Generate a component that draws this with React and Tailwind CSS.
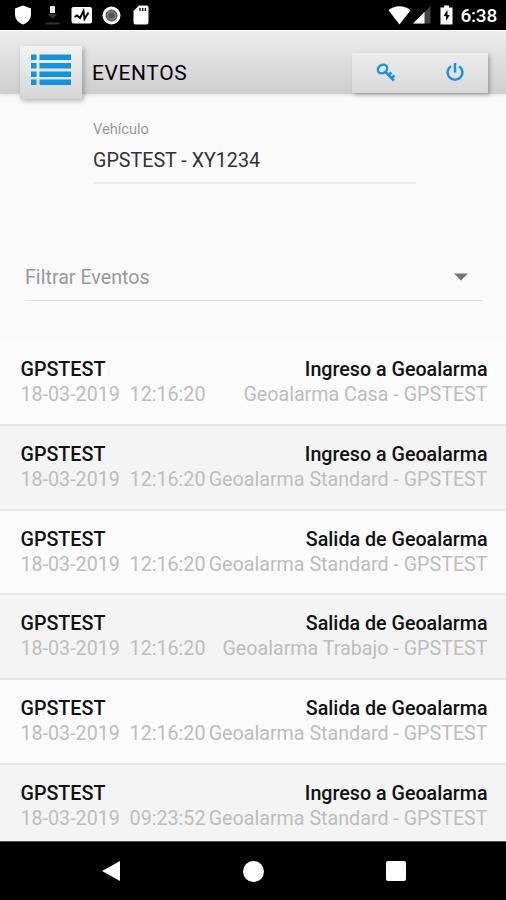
const events = [
  { time: "12:16:20", type: "Ingreso a Geoalarma", zone: "Geoalarma Casa - GPSTEST" },
  { time: "12:16:20", type: "Ingreso a Geoalarma", zone: "Geoalarma Standard - GPSTEST" },
  { time: "12:16:20", type: "Salida de Geoalarma", zone: "Geoalarma Standard - GPSTEST" },
  { time: "12:16:20", type: "Salida de Geoalarma", zone: "Geoalarma Trabajo - GPSTEST" },
  { time: "12:16:20", type: "Salida de Geoalarma", zone: "Geoalarma Standard - GPSTEST" },
  { time: "09:23:52", type: "Ingreso a Geoalarma", zone: "Geoalarma Standard - GPSTEST" },
];

function StatusBar() {
  return (
    <div className="h-[30px] flex-none bg-black flex items-center justify-between pl-[14px] pr-[9px] text-white">
      <div className="flex items-center">
        <svg className="w-[18px] h-5" viewBox="0 0 18 20" fill="currentColor">
          <path d="M9 0.500 17 3.500V9c0 5-3 8.600-8 10.500C4 17.600 1 14 1 9V3.500Z" />
        </svg>
        <svg className="w-4 h-5 ml-3" viewBox="0 0 16 20">
          <path d="M6 1h5v7H6Z" fill="#e8e8e8" />
          <path d="M3.500 9h10l-5 5Z" fill="#333" />
          <path d="M1.500 17.500h14v2h-14Z" fill="#333" />
        </svg>
        <svg className="w-[22px] h-[18px] ml-[11px]" viewBox="0 0 22 18">
          <rect x="0.500" y="1" width="20.500" height="16.500" rx="2" fill="#fff" />
          <path d="m3.500 11 2.500-1.500L9 12l3.500-7 1 8 4-6.500" fill="none" stroke="#000" strokeWidth="1.900" />
        </svg>
        <svg className="w-[19px] h-[19px] ml-[9px]" viewBox="0 0 19 19">
          <circle cx="9.500" cy="9.500" r="9" fill="#fff" />
          <circle cx="9.500" cy="9.500" r="5.500" fill="#777" stroke="#444" />
          <circle cx="9.500" cy="9.500" r="3" fill="#555" />
        </svg>
        <svg className="w-4 h-5 ml-3" viewBox="0 0 16 20">
          <path d="M6 0.500h7.500a2 2 0 0 1 2 2v15a2 2 0 0 1-2 2h-11a2 2 0 0 1-2-2V6Z" fill="#fff" />
          <path d="M7 3v3M9.700 3v3M12.400 3v3" stroke="#000" strokeWidth="1.300" />
        </svg>
      </div>
      <div className="flex items-center">
        <svg className="w-[23px] h-[19px]" viewBox="0 0 23 19" fill="currentColor">
          <path d="M0.500 4.300C7-1 16-1 22.500 4.300L11.500 18.500Z" />
        </svg>
        <svg className="w-[19px] h-[18px] ml-[1px]" viewBox="0 0 19 18">
          <path d="M18.500 0v17.500H1Z" fill="#444" />
          <path d="M12.500 6v11.500H1Z" fill="#fff" />
        </svg>
        <svg className="w-[13px] h-5 ml-[9px]" viewBox="0 0 13 20">
          <path d="M4 0.500h5v2h3.500V19.500H0.500V2.500H4Z" fill="#fff" />
          <path d="M7.500 5 3.500 11h2.500V16L9.800 10H7.500Z" fill="#000" />
        </svg>
        <span className="ml-[7px] text-[19px] leading-none font-medium tracking-[-0.200px]">6:38</span>
      </div>
    </div>
  );
}

function Header() {
  return (
    <header className="relative z-10 h-[64px] flex-none flex items-start pl-[20px] pr-[18px] bg-linear-to-b from-[#ededed] to-[#cecece] border-t border-white shadow-[0_1px_4px_rgba(0,0,0,0.12)]">
      <button className="w-[62px] h-[53px] mt-[15px] flex-none flex justify-center pt-2 bg-linear-to-b from-[#f3f3f3] to-[#d5d5d5] shadow-[2px_2px_5px_rgba(0,0,0,0.28)]">
        <svg className="w-10 h-8" viewBox="0 0 40 32" fill="#1593dc">
          <path d="M0 0.500h5.500V6H0ZM8.500 0.500H40V6H8.500ZM0 9h5.500v5.500H0ZM8.500 9H40v5.500H8.500ZM0 17.500h5.500V23H0ZM8.500 17.500H40V23H8.500ZM0 25.500h5.500V31H0ZM8.500 25.500H40V31H8.500Z" />
        </svg>
      </button>
      <h1 className="ml-[10px] mt-[30px] text-[21px] leading-6 font-[450] tracking-[0.600px] text-black">EVENTOS</h1>
      <div className="ml-auto mt-[22px] w-[136px] h-[40px] flex items-center bg-linear-to-b from-[#ececec] to-[#d8d8d8] shadow-[2px_2px_4px_rgba(0,0,0,0.26)]">
        <button className="flex-1 flex justify-center">
          <svg className="w-5 h-5" viewBox="0 0 20 20" fill="none" stroke="#1593dc" strokeWidth="2.400">
            <ellipse cx="6.500" cy="6" rx="5" ry="4" transform="rotate(-35 6.500 6)" />
            <path strokeWidth="2.700" d="m9.500 9 8.500 8.500M12.500 12l3-2.500M15.500 15l3-2.500" />
          </svg>
        </button>
        <button className="flex-1 flex justify-center">
          <svg className="w-[18px] h-[20px] ml-[1px]" viewBox="0 0 18 20" fill="none" stroke="#1593dc" strokeWidth="2.500">
            <path d="M5 3.200a7.400 7.400 0 1 0 8 0M9 0v9.500" />
          </svg>
        </button>
      </div>
    </header>
  );
}

function EventRow({ event }) {
  return (
    <li className="h-[84.8px] pl-[20.500px] pr-[18.500px] pt-[16px] border-b-2 border-[#e4e4e4] odd:bg-[#fbfbfb] even:bg-[#f4f4f4] text-[19.680px] whitespace-nowrap">
      <div className="flex justify-between leading-[25px] font-medium text-[#111]">
        <span>GPSTEST</span>
        <span>{event.type}</span>
      </div>
      <div className="flex justify-between leading-[25px] text-[#bdbdbd]">
        <span className="whitespace-pre">18-03-2019  {event.time}</span>
        <span>{event.zone}</span>
      </div>
    </li>
  );
}

function NavBar() {
  return (
    <div className="h-[59px] flex-none flex items-center justify-between bg-black pl-[101px] pr-[100px] border-t border-[#555]">
      <svg className="w-5 h-[22px]" viewBox="0 0 20 22" fill="#fff">
        <path d="M19 1v20L1 11Z" />
      </svg>
      <div className="w-[21px] h-[21px] rounded-full bg-white" />
      <div className="w-5 h-5 rounded-[2px] bg-white" />
    </div>
  );
}

export default function App() {
  return (
    <div className="w-[506px] h-[900px] overflow-hidden flex flex-col bg-[#fafafa] font-['Roboto',sans-serif]">
      <StatusBar />
      <Header />
      <div className="ml-[93px] mt-[25px] w-[323px] h-[65px] flex-none border-b-2 border-[#ebebeb]">
        <div className="text-[14.600px] leading-5 text-[#999]">Vehículo</div>
        <div className="mt-[10px] text-[19.680px] leading-6 text-[#333]">GPSTEST - XY1234</div>
      </div>
      <div className="ml-[25px] mt-[80px] w-[458px] h-[37px] flex-none flex items-start justify-between border-b border-[#e0e0e0]">
        <span className="mt-[2px] text-[19.680px] leading-6 text-[#999]">Filtrar Eventos</span>
        <svg className="w-[14px] h-2 mt-[9px] mr-[15px]" viewBox="0 0 14 8" fill="#757575">
          <path d="M0 0.500h14L7 7.500Z" />
        </svg>
      </div>
      <ul className="mt-[40px] flex-1 min-h-0 overflow-hidden">
        {events.map((event, i) => (
          <EventRow key={i} event={event} />
        ))}
      </ul>
      <NavBar />
    </div>
  );
}
